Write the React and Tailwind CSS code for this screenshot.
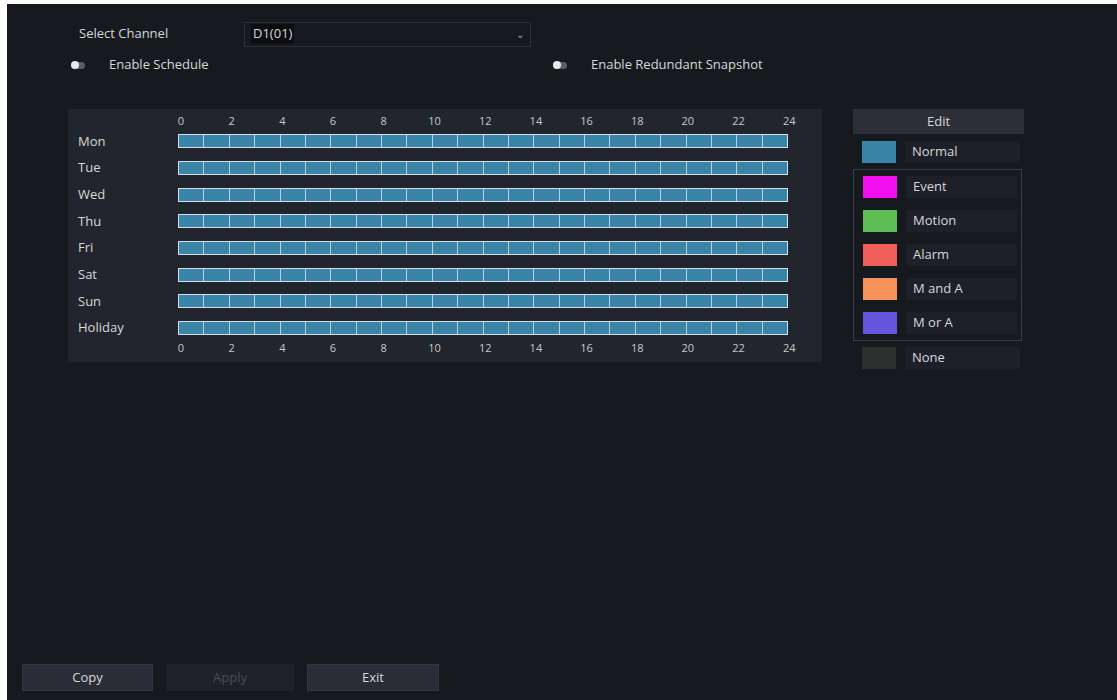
import React from 'react';

const days = ['Mon', 'Tue', 'Wed', 'Thu', 'Fri', 'Sat', 'Sun', 'Holiday'];
const hours = [0, 2, 4, 6, 8, 10, 12, 14, 16, 18, 20, 22, 24];
const legend = [
    { name: 'Event', color: 'bg-[#f10ff0]' },
    { name: 'Motion', color: 'bg-[#5fbd55]' },
    { name: 'Alarm', color: 'bg-[#f0605a]' },
    { name: 'M and A', color: 'bg-[#f7935a]' },
    { name: 'M or A', color: 'bg-[#6456dd]' },
];

const Toggle = ({ label }) => (
    <div className="flex items-center gap-[24px]">
        <div className="w-[14px] h-[7px] rounded-full bg-[#5a5d63] flex items-center">
            <div className="w-[8px] h-[8px] rounded-full bg-[#e8e8e8]" />
        </div>
        <span>{label}</span>
    </div>
);

const HourLabels = () => (
    <div className="flex ml-[107px] w-[620px] justify-between h-[14px] items-center text-[11px] text-[#c8c8c8]">
        {hours.map((h) => (
            <span key={h} className="w-[12px] text-center">{h}</span>
        ))}
    </div>
);

const LegendRow = ({ name, color }) => (
    <div className="flex items-center h-[34px] pl-[9px] gap-[9px]">
        <div className={`w-[34px] h-[22px] ${color}`} />
        <div className="flex-1 h-[22px] bg-[#1d2028] flex items-center pl-[7px] mr-[4px]">{name}</div>
    </div>
);

export default function App() {
    return (
        <div className="w-[1117px] h-[700px] bg-white pl-[7px] pt-[4px]" style={{ fontFamily: '"Open Sans", "Liberation Sans", sans-serif' }}>
            <div className="h-full bg-[#16191e] text-[#d8d8d8] text-[13px] flex flex-col">
                <div className="flex items-center mt-[18px] ml-[72px] h-[24px]">
                    <span className="w-[165px]">Select Channel</span>
                    <div className="w-[287px] h-[25px] border border-[#2c2f36] bg-[#16191e] flex items-center justify-between px-[6px]">
                        <span className="bg-[#0c0d10] px-[2px]">D1(01)</span>
                        <span className="text-[10px] text-[#aaa]">⌄</span>
                    </div>
                </div>
                <div className="flex mt-[6px] ml-[64px] h-[26px] items-center">
                    <div className="w-[482px]"><Toggle label="Enable Schedule" /></div>
                    <Toggle label="Enable Redundant Snapshot" />
                </div>
                <div className="flex mt-[31px] ml-[61px]">
                    <div className="w-[754px] h-[253px] bg-[#22252d] pt-[5px]">
                        <HourLabels />
                        <div className="flex flex-col">
                            {days.map((d) => (
                                <div key={d} className="flex items-center h-[26.7px]">
                                    <span className="w-[110px] pl-[10px]">{d}</span>
                                    <div className="w-[610px] h-[14px] flex border border-[#cfe3ee] bg-[#3a84a8]">
                                        {Array.from({ length: 24 }).map((_, i) => (
                                            <div key={i} className="flex-1 border-r border-[#b8d4e3] last:border-r-0" />
                                        ))}
                                    </div>
                                </div>
                            ))}
                        </div>
                        <HourLabels />
                    </div>
                    <div className="ml-[31px] w-[171px]">
                        <div className="h-[25px] bg-[#2c2f38] flex items-center justify-center">Edit</div>
                        <div className="mt-[1px]"><LegendRow name="Normal" color="bg-[#3a84a8]" /></div>
                        <div className="border border-[#3a3d45] mr-[2px]">
                            {legend.map((l) => <LegendRow key={l.name} {...l} />)}
                        </div>
                        <LegendRow name="None" color="bg-[#2e302f]" />
                    </div>
                </div>
                <div className="mt-auto mb-[9px] ml-[15px] flex gap-[13px] h-[27px]">
                    <button className="w-[131px] bg-[#2a2d37] border border-[#33363f]">Copy</button>
                    <button className="w-[128px] bg-[#1e212a] text-[#4a4d56]">Apply</button>
                    <button className="w-[132px] bg-[#2a2d37] border border-[#33363f]">Exit</button>
                </div>
            </div>
        </div>
    );
}
